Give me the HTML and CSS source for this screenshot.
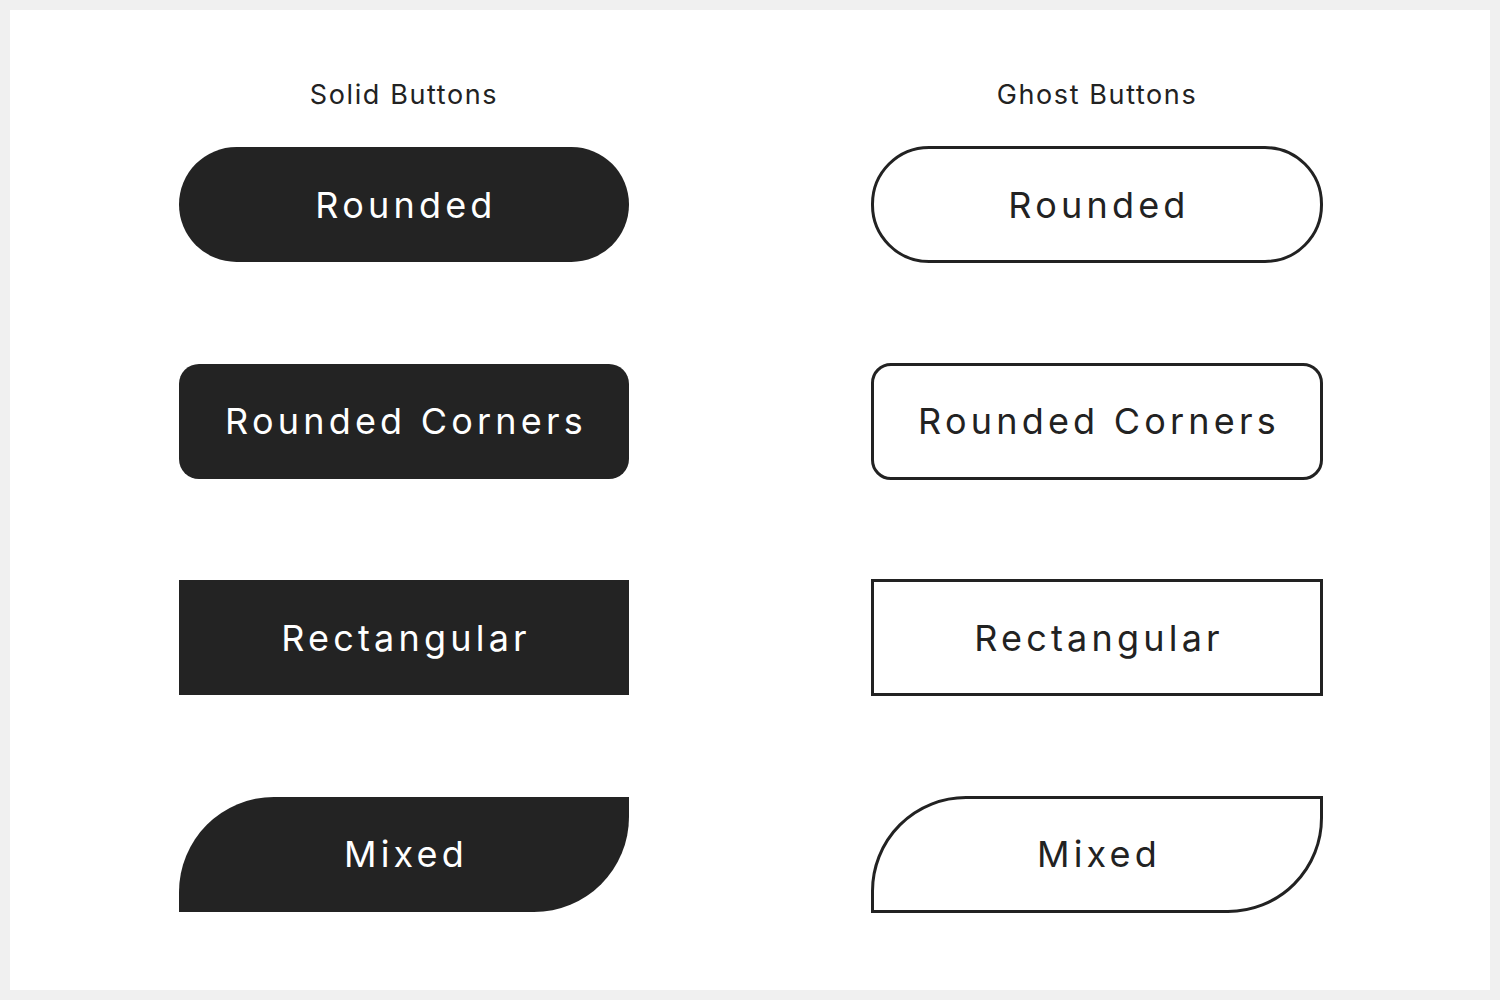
FILE: index.html
```html
<!DOCTYPE html>
<html lang="en">
<head>
<meta charset="utf-8">
<title>Buttons</title>
<link rel="stylesheet" href="styles.css">
</head>
<body>
<main class="card">
  <section class="column">
    <h2 class="heading">Solid Buttons</h2>
    <div class="btn solid pill">Rounded</div>
    <div class="btn solid corners">Rounded Corners</div>
    <div class="btn solid rect">Rectangular</div>
    <div class="btn solid mixed">Mixed</div>
  </section>
  <section class="column">
    <h2 class="heading">Ghost Buttons</h2>
    <div class="btn ghost pill">Rounded</div>
    <div class="btn ghost corners">Rounded Corners</div>
    <div class="btn ghost rect">Rectangular</div>
    <div class="btn ghost mixed">Mixed</div>
  </section>
</main>
</body>
</html>
```

FILE: styles.css
```css
html, body {
  margin: 0;
  padding: 0;
}
body {
  background: #f0f0f0;
  width: 1500px;
  height: 1000px;
  padding: 10px;
  box-sizing: border-box;
  font-family: "Inter", "Roboto", "Liberation Sans", sans-serif;
  color: #222222;
}
.card {
  background: #ffffff;
  width: 1480px;
  height: 980px;
  box-sizing: border-box;
  padding: 70px 0 0 169px;
  display: grid;
  grid-template-columns: 450px 450px;
  column-gap: 243px;
  align-items: start;
}
.column {
  display: flex;
  flex-direction: column;
  align-items: center;
  gap: 101.5px;
}
.heading {
  margin: 0 0 -64.5px 0;
  font-size: 27px;
  line-height: 30px;
  font-weight: 400;
  letter-spacing: 1.6px;
  color: #222222;
}
.btn {
  box-sizing: border-box;
  width: 450px;
  height: 115px;
  display: flex;
  align-items: center;
  justify-content: center;
  font-size: 36px;
  font-weight: 400;
  letter-spacing: 4.2px;
  padding-left: 4px;
}
.solid {
  background: #232323;
  color: #ffffff;
}
.ghost {
  background: #ffffff;
  color: #222222;
  border: 3px solid #222222;
  width: 452px;
  height: 117px;
  margin: -1px;
}
.pill { border-radius: 58px; }
.corners { border-radius: 20px; }
.rect { border-radius: 0; }
.mixed { border-radius: 95px 0 95px 0; }
```
